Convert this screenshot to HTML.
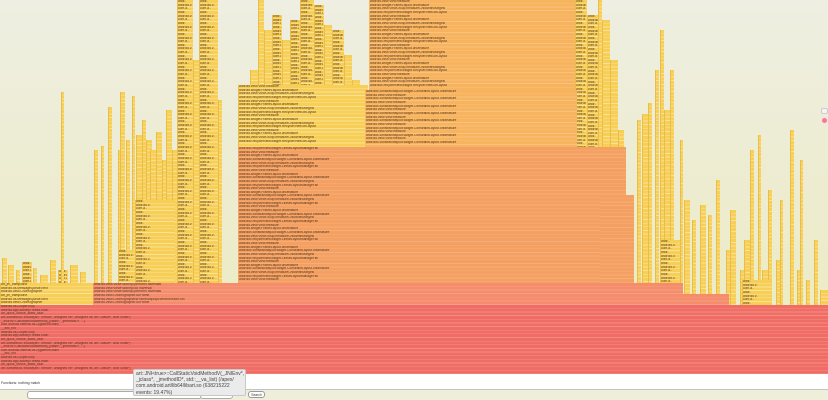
<!DOCTYPE html>
<html><head><meta charset="utf-8"><style>
*{margin:0;padding:0;box-sizing:border-box}
body{width:828px;height:400px;overflow:hidden;position:relative;background:linear-gradient(#eeeee2,#ecebbf 370px);font-family:"Liberation Sans",sans-serif}
.b{position:absolute}
.y{background:repeating-linear-gradient(180deg,#f7cf56 0,#f7cf56 2.9px,#fbe29a 2.9px,#fbe29a 3.65px);border-left:.5px solid #e8bd4a}
.o1{background:repeating-linear-gradient(180deg,#f7b35d 0,#f7b35d 2.9px,#f9c37f 2.9px,#f9c37f 3.65px)}
.o2{background:repeating-linear-gradient(180deg,#f4a062 0,#f4a062 2.9px,#f6ae77 2.9px,#f6ae77 3.65px)}
.s{background:repeating-linear-gradient(180deg,#f58c6c 0,#f58c6c 2.9px,#f7a085 2.9px,#f7a085 3.65px)}
.r{background:repeating-linear-gradient(180deg,#ef6d66 0,#ef6d66 2.9px,#f48d80 2.9px,#f48d80 3.65px)}
.t{position:absolute;font-size:3.3px;line-height:3.65px;color:#5a3a20;white-space:nowrap;overflow:hidden}
</style></head><body>
<div id="f"></div>
<div class="b" style="left:0;top:374px;width:828px;height:15px;background:#fff"></div>
<div class="b" style="left:0;top:389px;width:828px;height:1px;background:#c4c4c4"></div>
<div class="b" style="left:0;top:390px;width:828px;height:10px;background:#eeeedb"></div>
<div class="b" style="left:1px;top:381px;font-size:3.5px;color:#333">Functions: nothing match</div>
<div class="b" style="left:27px;top:391px;width:175px;height:8px;background:#fff;border:.6px solid #aaa;border-radius:3px"></div>
<div class="b" style="left:200px;top:391px;width:33px;height:8px;background:#fff;border:.6px solid #aaa;border-radius:3px"></div>
<div class="b" style="left:248px;top:391px;width:17px;height:7px;background:#fff;border:.6px solid #999;border-radius:3px;font-size:3.3px;line-height:6px;text-align:center;color:#333">Search</div>
<div class="b" style="left:133px;top:369px;width:113px;height:27px;background:#ebebeb;border:.6px solid #c8c8c8;border-radius:2px;padding:1px 2px;font-size:5px;line-height:6.2px;color:#444">art::JNI&lt;true&gt;::CallStaticVoidMethodV(_JNIEnv*, _jclass*, _jmethodID*, std::__va_list) (/apex/ com.android.art/lib64/libart.so (638215222 events: 19.47%)</div>
<div class="b" style="left:821px;top:108px;width:7px;height:6px;background:#f4f4f4;border:.5px solid #ccc;border-radius:2px"></div>
<div class="b" style="left:821px;top:117px;width:7px;height:7px;background:#f27a9a;border-radius:50%;border:1px solid #fdd"></div>
<script>
var f=document.getElementById('f'),h='';
function R(c,x,y,w,hh,t){h+='<div class="b '+c+'" style="left:'+x+'px;top:'+y+'px;width:'+w+'px;height:'+hh+'px"></div>';
 if(t){var n=Math.floor(hh/3.65);for(var i=0;i<n;i++)h+='<div class="t" style="left:'+(x+1)+'px;top:'+(y+i*3.65)+'px;width:'+(w-2)+'px">'+t[i%t.length]+'</div>';}}
var sp=[[2,5,258],[8,6,265],[16,4,270],[22,10,262],[33,4,268],[40,8,275],[50,6,260],[58,10,270],[70,8,265],[80,6,272],
[61,3,92],[94,4,150],[101,3,146],[108,4,107],[118,6,150],[120,5,92],[126,4,140],[132,3,96],[136,6,135],[142,4,120],[146,6,140],[150,6,150],[156,6,132],[162,4,160],[166,6,110],[172,5,150],[118,58,250],[135,40,200],
[177,16,0],[193,6,60],[199,19,0],[218,4,100],
[238,12,100],[250,8,70],[258,6,0],[264,8,30],[272,10,15],[282,8,40],[290,10,20],[300,14,0],[314,10,5],[324,8,25],[332,12,30],[344,8,55],[352,8,80],[358,8,105],
[575,12,0],[587,12,15],[598,4,0],[602,8,20],[610,8,60],[618,6,130],
[637,4,120],[642,6,114],[648,4,103],[655,4,70],[660,4,30],[664,6,110],[670,4,70],[680,3,140],[684,6,200],[692,4,220],[700,6,205],[708,4,215],[716,4,180],[726,4,250],[730,6,210],[740,4,270],[744,6,240],[750,4,150],[758,3,135],[762,8,270],[768,4,190],[776,6,260],[780,3,200],[790,4,130],[797,6,270],[800,3,160],[806,4,280],[814,4,240],[820,8,290],[660,20,240],[742,30,280]];
var lab=['android.view.View.measure','android.widget.FrameLayout.onMeasure','android.view.ViewGroup.measureChildWithMargins','androidx.recyclerview.widget.RecyclerView.onLayout'];
sp.forEach(function(s){R('y',s[0],s[2],s[1],374-s[2],s[1]>9?['andr..','android.v..','com.a..']:null)});
R('y',238,85,130,62,lab);
R('y',0,283,93,22,['art_jni_trampoline','android.os.MessageQueue.next','android.view.Choreographer']);
R('o1',369,0,206,90,lab);
R('o1',365,90,212,57,['androidx.constraintlayout.widget.ConstraintLayout.onMeasure','android.view.View.measure']);
R('o2',238,147,388,136,['androidx.recyclerview.widget.LinearLayoutManager.fill','android.view.View.measure','android.widget.FrameLayout.onMeasure','androidx.constraintlayout.widget.ConstraintLayout.onMeasure','android.view.ViewGroup.measureChildWithMargins']);
R('o2',600,195,34,88);
R('s',93,283,590,11,['android.view.ViewRootImpl.performTraversals','android.view.ViewRootImpl.doTraversal']);
R('s',93,294,636,11,['android.view.Choreographer.doFrame','android.view.Choreographer$FrameDisplayEventReceiver.run']);
R('r',0,305,828,69,['android.os.Looper.loop','android.app.ActivityThread.main','art_quick_invoke_static_stub','art::ArtMethod::Invoke(art::Thread*, unsigned int*, unsigned int, art::JValue*, char const*)','_JNIEnv::CallStaticVoidMethod(_jclass*, _jmethodID*, ...)','com.android.internal.os.ZygoteInit.main','__libc_init']);
f.innerHTML=h;
</script>
</body></html>
